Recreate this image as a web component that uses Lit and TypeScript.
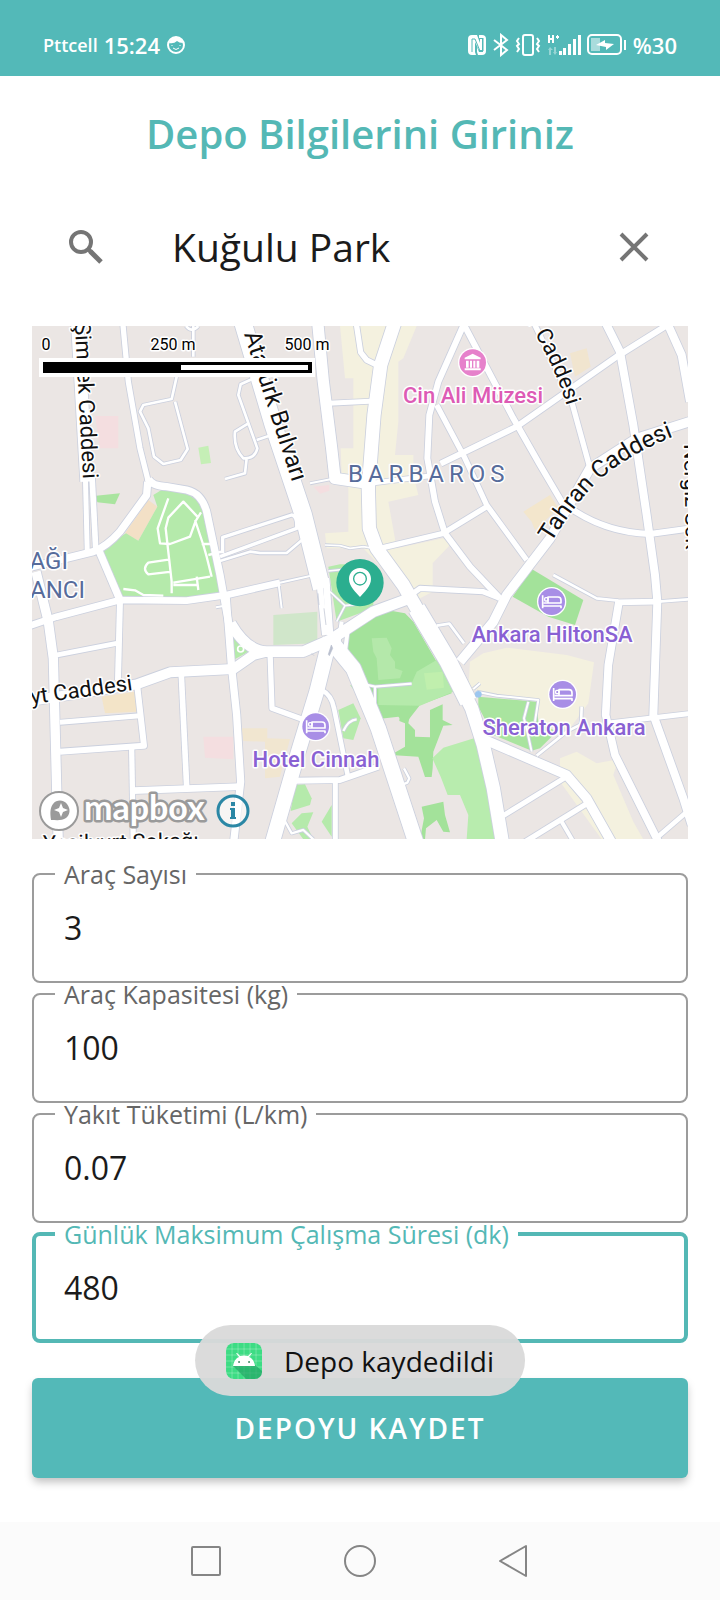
import { LitElement, html, svg, css } from "lit";
import { customElement, property, state } from "lit/decorators.js";
import { classMap } from "lit/directives/class-map.js";

/* ---------- Map data (drawn on a grid three times finer than the labels) ---------- */

type Area = [string, string];
type Road = [number, string];

const AREAS: Area[] = [
  ["#f4f1df", "M960 33H1190L1150 130L1135 140V320L1125 420H1180V480L1195 540L1105 560L1130 700L1270 670L1290 690L1238 745V830L1180 860L1030 700H920L915 655L985 650V520L965 480L962 400H1000V190H975Z"],
  ["#f4f1df", "M1350 1040L1390 1015L1460 998L1640 1020L1722 1042L1705 1165L1650 1240L1550 1230L1555 1155L1420 1140L1345 1120Z"],
  ["#f4f1df", "M1620 1330L1670 1310L1730 1345L1795 1333L1780 1380L1840 1520L1870 1573H1745L1620 1400Z"],
  ["#f3e0c6", "M385 555L412 575L355 677L315 655Z"],
  ["#f1e5cf", "M1650 115L1700 100L1712 155L1665 185Z"],
  ["#f3e6cc", "M1510 590L1590 540L1615 580L1545 645L1535 620Z"],
  ["#f3e4c8", "M245 1145L345 1130L350 1190L255 1195Z"],
  ["#f1e6d0", "M665 1240H742V1270L810 1272L780 1385L735 1390V1280L670 1278Z"],
  ["#f4dee0", "M225 303H295V400H240Z"],
  ["#f4dee0", "M880 515L928 510V527L900 536Z"],
  ["#f4dee0", "M550 1265H640V1333L555 1328Z"],
  ["#c5efb6", "M535 398L565 392L573 444L543 448Z"],
  ["#a9e49f", "M228 542L300 535L285 568L232 562Z"],
  ["#b5eaab", "M240 705L318 655L355 677L412 575L400 540L440 515L530 540L560 600L615 840L500 850L300 850Z"],
  ["#d0e6ca", "M760 900L892 890V985L760 990Z"],
  ["#b5eaab", "M640 965L700 1002L640 1035Z"],
  ["#b5eaab", "M925 755L960 748H1060V880L950 920Z"],
  ["#a3e29a", "M980 950L1050 900L1100 885L1155 895L1180 920L1250 1040L1295 1135L1200 1170L1165 1215L1075 1220L1060 1150L1000 1050L975 1000Z"],
  ["#b5eaab", "M1075 1112L1175 1105L1190 1070L1255 1032L1300 1130L1200 1172L1075 1170Z"],
  ["#c0efad", "M1212 1075L1268 1070L1272 1118L1220 1124Z"],
  ["#b4e8aa", "M1055 970L1100 968L1115 1000L1110 1020L1125 1040V1060L1148 1068L1140 1090L1075 1095L1070 1030L1060 1010Z"],
  ["#ebe6e4", "M1075 1212L1135 1205L1155 1225V1290L1110 1320L1085 1290Z"],
  ["#a3e29a", "M1140 1180L1172 1190L1165 1225L1185 1245V1265L1230 1267V1185L1268 1168V1215L1298 1230L1270 1232L1240 1310L1238 1360L1235 1386H1215L1195 1325L1112 1320L1155 1295V1225L1138 1218Z"],
  ["#b8ecae", "M1237 1330L1270 1298L1362 1270L1395 1350L1432 1573H1340L1345 1500L1320 1440L1283 1440L1262 1385Z"],
  ["#a3e29a", "M1205 1475L1270 1460L1275 1500L1290 1552L1270 1550L1250 1515L1218 1540L1215 1573H1200L1212 1510Z"],
  ["#b5eaab", "M955 1185L1000 1165L1022 1210L1000 1275L970 1270Z"],
  ["#b5eaab", "M990 1110L1045 1120L1060 1170L1020 1150Z"],
  ["#b5eaab", "M825 1410L855 1408L875 1450L870 1470L812 1488Z"],
  ["#b5eaab", "M845 1495L880 1492L862 1535L880 1573H850L815 1525Z"],
  ["#b5eaab", "M905 1520L935 1470V1565Z"],
  ["#a3e29a", "M1535 762L1690 855L1665 930L1585 905L1478 845Z"],
  ["#a9e49f", "M1375 1145L1550 1160L1555 1220L1610 1250L1560 1300L1535 1307L1420 1260L1375 1175Z"],
];

const ROADS: Road[] = [
  // north-west
  [38, "M172 20L200 500"],
  [15, "M196 480L202 720"],
  [17, "M216 480L227 700"],
  [16, "M308 20L325 200L360 400L385 500"],
  [22, "M385 490Q392 512 440 515L500 525Q545 535 560 590L600 780L625 920L640 960"],
  [22, "M383 500L380 540L300 650Q260 695 220 710L30 757"],
  [22, "M236 705L300 855"],
  [8, "M470 185L455 252L370 270L360 290L385 340L402 425L430 447L482 435L503 402L465 260"],
  [8, "M520 20V125M498 33Q515 55 535 33"],
  [8, "M702 190L662 208L655 240L712 400Q705 432 670 430Q640 400 645 350L685 325M710 375L755 360M680 430L675 475L615 492"],
  [10, "M608 715V667L815 600Q832 602 830 640L600 725"],
  [8, "M600 738L690 710L720 714H800L852 670"],
  [52, "M665 10L760 330L850 600L890 760L905 820"],
  [34, "M893 20L910 200L935 400L945 490L1045 505"],
  [15, "M925 265L1065 258"],
  [6, "M870 505L935 492"],
  [16, "M1008 20L1022 112L1040 135L1080 155"],
  [5, "M915 690L960 692L990 700L1030 695L1060 700"],
  // west
  [28, "M48 770L85 920L100 1030L110 1420L115 1590"],
  [20, "M30 932L110 905L300 855L500 857L620 840L780 803"],
  [6, "M780 803L870 783M775 800L785 880M588 877L610 873"],
  [15, "M100 1022L290 985"],
  [18, "M300 855L294 1095"],
  [15, "M120 1222L360 1202"],
  [18, "M120 1310L372 1292L352 1115"],
  [16, "M335 1300L340 1590"],
  [17, "M484 1080L500 1415"],
  [20, "M340 1427L660 1415"],
  [22, "M618 840L635 1060L650 1200L662 1400L640 1590"],
  [30, "M30 1158L350 1108L450 1072L640 1062L700 1020L740 1010"],
  [32, "M632 925Q680 1008 740 1010H850L930 975L1060 890L1170 850"],
  [16, "M750 1010L756 1180L845 1212"],
  // centre
  [18, "M895 770L915 960"],
  [20, "M918 790L930 960"],
  [5, "M925 768L1000 760M930 830L975 872L950 920M975 872L1010 868"],
  [44, "M930 970L890 1130L835 1310L755 1590"],
  [46, "M930 975L1000 1060L1075 1240L1190 1590"],
  [12, "M965 920L950 1020M985 930L975 1010"],
  [14, "M905 1125Q935 1140 942 1180L985 1390"],
  [18, "M820 1397L960 1395L1075 1355"],
  [15, "M946 1400V1590"],
  [7, "M790 1510L815 1555L850 1545L880 1573M970 1248Q985 1215 1010 1213"],
  [7, "M1010 1103L1065 1115L1175 1106M1065 1115V1210"],
  [7, "M1152 1360L1168 1390L1162 1403L1140 1412"],
  // spine to the east of the park
  [40, "M1125 20L1082 150L1062 300L1045 520L1048 640L1070 700L1150 810L1190 880L1285 1040L1355 1180L1390 1290L1420 1420L1450 1600"],
  [52, "M1190 880L1285 1040L1345 1160"],
  // north-east
  [18, "M1335 20L1255 200L1228 300L1222 430L1245 560L1275 655L1350 755L1440 850"],
  [18, "M1335 35L1480 310L1560 450L1625 560Q1740 652 1890 657L2015 640"],
  [16, "M1250 270L1335 430L1400 570L1520 735"],
  [18, "M1262 446L1490 335L1790 125L1950 25"],
  [14, "M1050 505L1235 482"],
  [16, "M1080 700L1270 655L1400 575"],
  [16, "M1540 20L1655 260L1710 460"],
  [24, "M1755 20L1800 110L1840 330L1880 600L1905 780L1912 860L1900 1200L1990 1450L2015 1530"],
  [24, "M1940 20L1985 120L2010 260"],
  [28, "M2015 318L1850 370L1710 460L1590 670L1460 840L1420 920L1320 1040"],
  [16, "M1175 838L1200 820L1390 830L1440 850"],
  [8, "M1600 780L1730 850L1795 857M1915 860L2015 852M1250 932L1288 926L1332 985"],
  [17, "M1790 862L1910 860"],
  // south-east
  [23, "M1797 860L1765 1050L1757 1200L1785 1320L1920 1590"],
  [14, "M1905 1573L2015 1478"],
  [15, "M1760 1225L2015 1195"],
  [28, "M1380 1268L1640 1380L1700 1450L1785 1600"],
  [15, "M1450 1502L1640 1385"],
  [16, "M1500 1590L1705 1463"],
  [12, "M1622 1515L1660 1580"],
  [8, "M1550 1322L1640 1250L1683 1228L1685 1175"],
  [6, "M1360 1122L1380 1105M1370 1130L1430 1142L1555 1155L1545 1220M1525 1160L1512 1210L1522 1250L1535 1310"],
];

const PARK_PATHS =
  "M445 550L413 640L420 685L450 687L510 665L527 618L543 592M535 608L490 560L445 608L437 640L455 800V835M525 615L550 690L560 725L575 785M545 687H575M450 733L385 743Q365 762 385 778L455 770M460 803L570 785M310 822L345 826L370 840L430 842M460 810H530M530 785L535 825M565 720L605 710";

const bed = (x: number, y: number) => svg`
  <g transform="translate(${x} ${y})">
    <circle r="44" fill="#fff"></circle>
    <circle r="40" fill="#a88ee6"></circle>
    <path d="M-27 -19V20M-27 13H28V20M-11 5V-14H19Q28 -14 28 -5V4H-24" fill="none" stroke="#fff" stroke-width="5"></path>
    <rect x="-21" y="-12" width="10" height="10" rx="3" fill="none" stroke="#fff" stroke-width="4"></rect>
  </g>`;

@customElement("depot-map")
export class DepotMap extends LitElement {
  static styles = css`
    :host { display: block; position: relative; background: #ebe6e4; }
    .canvas { display: block; width: 100%; height: auto; overflow: hidden; }
    .label { font-family: Roboto, "Noto Sans", sans-serif; font-size: 24px; fill: #111; stroke: #fff; stroke-width: 3px; stroke-linejoin: round; paint-order: stroke; }
    .minor { font-size: 22px; }
    .poi { font-size: 22px; font-weight: 500; text-anchor: middle; fill: #8961d3; }
    .culture { fill: #dd5bb5; }
    .district { fill: #576c9b; }
    .wide { letter-spacing: 5px; }
    .end { text-anchor: end; }
    .scale { font-size: 16px; text-anchor: middle; fill: #000; }
    .attribution { position: absolute; left: 7px; bottom: 8px; display: flex; align-items: center; }
    .attribution svg { display: block; }
    .wordmark { width: 137px; height: 40px; }
    .brand { font-family: Lato, sans-serif; font-size: 34px; font-weight: 700; fill: #fff; stroke: #9a9a9a; stroke-width: 5px; stroke-linejoin: round; paint-order: stroke; }
    .info { padding: 0; border: 0; background: none; cursor: pointer; }
  `;

  render() {
    return html`
      <svg class="canvas" viewBox="0 0 656 513" role="img" aria-label="Kuğulu Park haritası">
        <defs>
          <path id="tahran" d="M519 217Q545 175 567 154Q600 126 646 109"></path>
          <path id="caddesi" d="M488 -14Q518 26 535 80"></path>
        </defs>
        <g transform="scale(.33333) translate(-36 -33)" stroke-linejoin="round">
          ${AREAS.map(([fill, d]) => svg`<path fill=${fill} d=${d}></path>`)}
          <g fill="none" stroke="#cbd0de">
            ${ROADS.map(([w, d]) => svg`<path stroke-width=${w + 5} d=${d}></path>`)}
          </g>
          <g fill="none" stroke="#fff">
            ${ROADS.map(([w, d]) => svg`<path stroke-width=${w} d=${d}></path>`)}
            <path stroke-width="7" d=${PARK_PATHS}></path>
            <circle cx="662" cy="1002" r="9" stroke-width="5"></circle>
          </g>
          <circle cx="1375" cy="1138" r="10" fill="#9cc6ef"></circle>
          <path d="M925 1018L934 990L938 1000L928 1022ZM894 835L897 870M912 880L918 930M875 1015L882 1022" fill="#b9bfce" stroke="#b9bfce" stroke-width="2"></path>
          <circle cx="1358" cy="143" r="44" fill="#fff"></circle>
          <circle cx="1358" cy="143" r="40" fill="#e681cb"></circle>
          <path fill="#fff" d="M1358 116L1382 128V133H1334V128ZM1338 137H1346V158H1338ZM1350 137H1356V158H1350ZM1360 137H1366V158H1360ZM1370 137H1378V158H1370ZM1334 160H1382V166H1334Z"></path>
          ${bed(1595, 860)} ${bed(1628, 1138)} ${bed(887, 1235)}
          <circle cx="1020" cy="803" r="71" fill="#2bae8f"></circle>
          <path fill="#fff" fill-rule="evenodd" d="M1020 759C1040 759 1053 774 1053 792C1053 814 1032 832 1020 846C1008 832 987 814 987 792C987 774 1000 759 1020 759ZM1020 770A21 21 0 1 0 1020 812A21 21 0 1 0 1020 770Z"></path>
          <circle cx="1020" cy="791" r="17" fill="#fff"></circle>
        </g>

        <text class="label minor end" transform="translate(51 153) rotate(87)">Şimşek Caddesi</text>
        <text class="label" transform="translate(212 8) rotate(72)">Atatürk Bulvarı</text>
        <text class="label minor end"><textPath href="#caddesi" startOffset="100%">r Caddesi</textPath></text>
        <text class="label"><textPath href="#tahran">Tahran Caddesi</textPath></text>
        <text class="label minor end" transform="translate(101 364) rotate(-8)">eyt Caddesi</text>
        <text class="label minor" transform="translate(11 525) rotate(-1)">Yeşilyurt Sokağı</text>
        <text class="label minor" transform="translate(652 118) rotate(89)">Nergiz Sok</text>

        <text class="label district wide" x="316" y="156">BARBAROS</text>
        <text class="label district end" x="36" y="243">AĞI</text>
        <text class="label district end" x="53" y="272">ANCI</text>

        <text class="label poi culture" x="441" y="77">Cin Ali Müzesi</text>
        <text class="label poi" x="520" y="316">Ankara HiltonSA</text>
        <text class="label poi" x="532" y="409">Sheraton Ankara</text>
        <text class="label poi" x="284" y="441">Hotel Cinnah</text>

        <rect x="7" y="32" width="276" height="19" fill="#fff"></rect>
        <rect x="11" y="36" width="269" height="11" fill="#000"></rect>
        <rect x="149" y="39" width="127" height="5" fill="#fff"></rect>
        <text class="label scale" x="14" y="24">0</text>
        <text class="label scale" x="141" y="24">250 m</text>
        <text class="label scale" x="275" y="24">500 m</text>
      </svg>

      <div class="attribution">
        <svg width="40" height="40" viewBox="0 0 40 40" aria-hidden="true">
          <circle cx="20" cy="20" r="19" fill="#fff" stroke="#9a9a9a" stroke-width="2"></circle>
          <path fill="#9a9a9a" d="M12 29C11 22 11 17 14 13C18 8 25 9 28 13C32 18 31 24 27 27C23 30 17 29 12 29Z"></path>
          <path fill="#fff" d="M22 12L24 17L29 19L24 21L22 26L20 21L15 19L20 17Z"></path>
        </svg>
        <svg class="wordmark" viewBox="0 0 137 40">
          <text class="brand" x="5" y="29">mapbox</text>
        </svg>
        <button class="info" aria-label="Harita bilgisi">
          <svg width="34" height="34" viewBox="0 0 34 34">
            <circle cx="17" cy="17" r="15" fill="#ffffff99" stroke="#2b87a5" stroke-width="3"></circle>
            <path fill="#2b87a5" d="M15 8H19V12H15ZM14 14H19V23H20V25H14V23H15V16H14Z"></path>
          </svg>
        </button>
      </div>
    `;
  }
}

/* ---------- Outlined text field ---------- */

@customElement("outlined-field")
export class OutlinedField extends LitElement {
  static styles = css`
    :host { display: block; }
    .box { box-sizing: border-box; min-width: 0; height: 120px; margin: 0; padding: 0; border: 2px solid #9c9c9c; border-radius: 8px; color: #666; }
    .legend { margin-left: 21px; padding: 0 9px; font-size: 25px; line-height: 22px; }
    .input { box-sizing: border-box; display: block; width: 100%; height: 84px; padding: 0 30px; border: 0; outline: 0; background: none; font: inherit; font-size: 32px; color: #1b1b1b; }
    .active { border: 4px solid #54b8b5; color: #54b8b5; }
    .active .legend { margin-left: 19px; }
    .active .input { padding: 0 28px; }
  `;
  @property() label = "";
  @property() value = "";
  @property({ type: Boolean }) active = false;

  render() {
    return html`
      <fieldset class=${classMap({ box: true, active: this.active })}>
        <legend class="legend"><label for="field">${this.label}</label></legend>
        <input class="input" id="field" type="text" inputmode="decimal" .value=${this.value} />
      </fieldset>
    `;
  }
}

/* ---------- Status bar ---------- */

@customElement("status-bar")
export class StatusBar extends LitElement {
  static styles = css`
    :host { display: flex; align-items: center; justify-content: space-between; box-sizing: border-box; height: 76px; padding: 14px 43px 0; background: #53b9b8; color: #fff; line-height: 32px; }
    .group { display: flex; align-items: center; gap: 6px; }
    .carrier { font-size: 18px; font-weight: 600; }
    .clock { font-size: 22px; font-weight: 600; }
    svg { display: block; }
  `;

  render() {
    return html`
      <div class="group">
        <span class="carrier">Pttcell</span>
        <span class="clock">15:24</span>
        <svg width="20" height="20" viewBox="0 0 20 20" fill="none" stroke="#fff" stroke-width="2">
          <circle cx="10" cy="10" r="8"></circle>
          <path fill="#fff" stroke="none" d="M3 8Q4 3 10 2Q16 3 17 8Q13 8 11 6Q8 9 3 8Z"></path>
          <path stroke-width="1" d="M6 10V11M14 10V11M7 13Q10 16 13 13"></path>
        </svg>
      </div>
      <div class="group">
        <svg width="20" height="22" viewBox="0 0 20 22">
          <path fill="#fff" d="M5 1H10L13 9V5H15V16H12L8 8V18L9 21H5Q1 21 1 17V5Q1 1 5 1ZM12 1H15Q19 1 19 5V17Q19 21 15 21H11L10 18V13L12 18H16V4H12Z"></path>
          <path fill="none" stroke="#53b9b8" stroke-width="1" d="M5 5V18M5 5H8L13 17H16V4"></path>
        </svg>
        <svg width="16" height="24" viewBox="0 0 16 24" fill="none" stroke="#fff" stroke-width="2">
          <path d="M1 7L14 17L8 22V2L14 7L1 17"></path>
        </svg>
        <svg width="26" height="24" viewBox="0 0 26 24" fill="none" stroke="#fff" stroke-width="2">
          <rect x="8" y="2" width="10" height="20" rx="2"></rect>
          <path d="M4 5L2 8L4 11L2 13L4 16L2 19M22 5L24 8L22 11L24 13L22 16L24 19"></path>
        </svg>
        <svg width="34" height="24" viewBox="0 0 34 24" fill="#fff">
          <path d="M1 2H3V5H5V2H7V10H5V7H3V10H1ZM9 3H10V2H11V3H12V5H11V6H10V5H9Z"></path>
          <path opacity=".4" d="M3 14L6 17H4V22H2V17H1ZM7 14H9V19H10L8 22L6 19H7Z"></path>
          <path d="M12 18H15V22H12ZM16 15H19V22H16ZM21 11H24V22H21ZM26 6H29V22H26ZM31 2H34V22H31Z"></path>
        </svg>
        <svg width="40" height="22" viewBox="0 0 40 22">
          <rect x="1" y="1" width="33" height="19" rx="4" fill="none" stroke="#fff" stroke-width="2"></rect>
          <rect x="4" y="4" width="9" height="13" fill="#fff" opacity=".5"></rect>
          <path fill="#fff" d="M9 11L18 6V9L27 10L19 16V13Z"></path>
          <rect x="37" y="6" width="2" height="10" fill="#fff"></rect>
        </svg>
        <span class="clock">%30</span>
      </div>
    `;
  }
}

/* ---------- Page ---------- */

@customElement("app-root")
export class AppRoot extends LitElement {
  static styles = css`
    :host { display: flex; flex-direction: column; min-height: 100vh; background: #fff; color: #1b1b1b; font-family: "Open Sans", "Noto Sans", sans-serif; }
    .content { display: flex; flex-direction: column; padding: 28px 32px 44px; }
    .title { margin: 0; text-align: center; font-size: 40px; line-height: 60px; font-weight: 600; color: #54b8b5; }
    .search { display: flex; align-items: center; height: 80px; margin: 43px 0 39px; padding: 0 36px; }
    .search-input { flex: 1; min-width: 0; margin: 0 64px 0 68px; padding: 0; border: 0; outline: 0; background: none; font: inherit; font-size: 39px; line-height: 60px; color: inherit; }
    .icon-button { flex: none; padding: 0; border: 0; background: none; cursor: pointer; }
    svg { display: block; }
    .fields { margin-top: 24px; }
    .actions { position: relative; margin-top: 35px; }
    .save { display: block; width: 100%; height: 100px; border: 0; border-radius: 6px; background: #53b9b8; color: #fff; font: inherit; font-size: 28px; font-weight: 600; letter-spacing: 2px; box-shadow: 0 5px 8px -1px #00000040; cursor: pointer; }
    .toast { position: absolute; top: -53px; left: 50%; transform: translateX(-50%); display: flex; align-items: center; gap: 22px; box-sizing: border-box; height: 71px; padding: 0 31px; border-radius: 36px; background: #d9d9d9f4; color: #111; font-size: 28px; white-space: nowrap; }
    .nav { display: flex; justify-content: center; align-items: center; gap: 118px; height: 78px; margin-top: auto; background: #fbfbfb; }
  `;

  @state() private place = "Kuğulu Park";

  private fields = [
    { label: "Araç Sayısı", value: "3" },
    { label: "Araç Kapasitesi (kg)", value: "100" },
    { label: "Yakıt Tüketimi (L/km)", value: "0.07" },
    { label: "Günlük Maksimum Çalışma Süresi (dk)", value: "480", active: true },
  ];

  render() {
    return html`
      <status-bar></status-bar>
      <main class="content">
        <h1 class="title">Depo Bilgilerini Giriniz</h1>
        <div class="search" role="search">
          <button class="icon-button" aria-label="Ara">
            <svg width="36" height="36" viewBox="0 0 36 36" fill="none" stroke="#757575" stroke-width="4">
              <circle cx="13" cy="13" r="10"></circle>
              <path stroke-width="5" d="M22 22L33 33"></path>
              <path d="M20 20L24 24"></path>
            </svg>
          </button>
          <input class="search-input" type="text" aria-label="Konum ara" .value=${this.place}
            @input=${(e: InputEvent) => (this.place = (e.target as HTMLInputElement).value)} />
          <button class="icon-button" aria-label="Temizle" @click=${() => (this.place = "")}>
            <svg width="36" height="36" viewBox="0 0 36 36" fill="none" stroke="#757575" stroke-width="4">
              <path d="M5 5L31 31M31 5L5 31"></path>
            </svg>
          </button>
        </div>
        <depot-map></depot-map>
        <div class="fields">
          ${this.fields.map(
            (f) => html`<outlined-field .label=${f.label} .value=${f.value} .active=${!!f.active}></outlined-field>`
          )}
        </div>
        <div class="actions">
          <button class="save">DEPOYU KAYDET</button>
          <div class="toast" role="status">
            <svg width="36" height="36" viewBox="0 0 36 36" aria-hidden="true">
              <rect width="36" height="36" rx="8" fill="#3ddc84"></rect>
              <path d="M6 0V36M12 0V36M18 0V36M24 0V36M30 0V36M0 6H36M0 12H36M0 18H36M0 24H36M0 30H36" stroke="#fff" stroke-opacity=".25"></path>
              <path fill="#22a565" opacity=".7" d="M7 23L20 36H28Q36 36 36 28L29 22Z"></path>
              <path fill="#fff" d="M7 23Q8 16 13 14L10 10L11 10L14 13Q18 12 22 13L25 10L26 10L23 14Q28 16 29 23Z"></path>
              <circle cx="13" cy="19" r="1" fill="#3c8f63"></circle>
              <circle cx="23" cy="19" r="1" fill="#3c8f63"></circle>
            </svg>
            <span>Depo kaydedildi</span>
          </div>
        </div>
      </main>
      <nav class="nav" aria-label="Sistem">
        <button class="icon-button" aria-label="Son uygulamalar">
          <svg width="36" height="36" viewBox="0 0 36 36" fill="none" stroke="#858585" stroke-width="2">
            <rect x="4" y="4" width="28" height="28" rx="1"></rect>
          </svg>
        </button>
        <button class="icon-button" aria-label="Ana ekran">
          <svg width="36" height="36" viewBox="0 0 36 36" fill="none" stroke="#858585" stroke-width="2">
            <circle cx="18" cy="18" r="15"></circle>
          </svg>
        </button>
        <button class="icon-button" aria-label="Geri">
          <svg width="36" height="36" viewBox="0 0 36 36" fill="none" stroke="#858585" stroke-width="2" stroke-linejoin="round">
            <path d="M30 3V33L4 18Z"></path>
          </svg>
        </button>
      </nav>
    `;
  }
}
